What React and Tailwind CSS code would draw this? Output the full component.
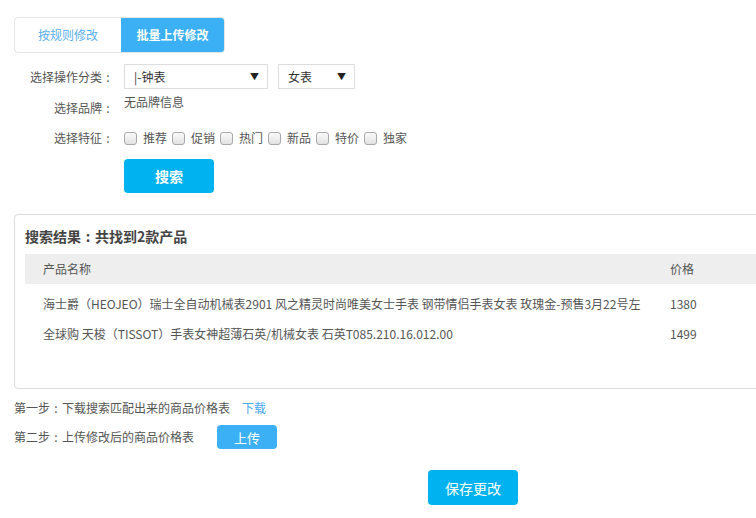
import React from "react";

const font = { fontFamily: '"Noto Sans CJK SC", "Noto Sans", sans-serif' };

function Colon() {
  return <span className="inline-block w-[12px] text-center">:</span>;
}

function Checkbox({ label }) {
  return (
    <label className="flex items-center">
      <span className="w-[13px] h-[13px] rounded-[3px] border border-[#a9a9a9] bg-gradient-to-b from-[#fafafa] to-[#e2e2e2] mr-[6px]"></span>
      <span className="mr-[5px]">{label}</span>
    </label>
  );
}

function Label({ text, className = "" }) {
  return (
    <div className={"w-[100px] mr-[10px] text-right whitespace-nowrap " + className}>
      {text}
      <Colon />
    </div>
  );
}

export default function App() {
  return (
    <div className="w-[756px] h-[518px] overflow-hidden bg-white text-[12px] text-[#555] leading-none" style={font}>
      <div className="pl-[14px] pt-[17px]">
        {/* tabs */}
        <div className="flex w-[211px] h-[36px] rounded-[4px] border border-[#e6e6e6] overflow-hidden">
          <div className="w-[106px] flex items-center justify-center text-[#5aaef0]">按规则修改</div>
          <div className="flex-1 flex items-center justify-center bg-[#3bb0f4] text-white font-bold">批量上传修改</div>
        </div>

        {/* form */}
        <div className="mt-[11px] flex items-center h-[25px]">
          <Label text="选择操作分类" />
          <div className="w-[144px] h-[25px] border border-[#ddd] flex items-center justify-between pl-[9px] pr-[8px] text-[#333]">
            <span>|-钟表</span>
            <span className="text-[9px] text-[#222]">▼</span>
          </div>
          <div className="ml-[10px] w-[77px] h-[25px] border border-[#ddd] flex items-center justify-between pl-[9px] pr-[8px] text-[#333]">
            <span>女表</span>
            <span className="text-[9px] text-[#222]">▼</span>
          </div>
        </div>

        <div className="mt-[7px] flex items-start h-[25px]">
          <Label text="选择品牌" className="pt-[6px]" />
          <div>无品牌信息</div>
        </div>

        <div className="mt-[7px] flex items-center h-[20px]">
          <Label text="选择特征" />
          <div className="flex items-center">
            {["推荐", "促销", "热门", "新品", "特价", "独家"].map((l) => (
              <Checkbox key={l} label={l} />
            ))}
          </div>
        </div>

        <div className="mt-[11px] pl-[110px]">
          <button className="w-[90px] h-[34px] rounded-[4px] bg-[#00b3f0] text-white text-[14px] font-bold">搜索</button>
        </div>

        {/* results */}
        <div className="mt-[21px] w-[780px] h-[175px] border border-[#ddd] rounded-[4px] pl-[10px] pt-[14px]">
          <div className="text-[14px] font-bold text-[#444] leading-[15px]">
            搜索结果<span className="inline-block w-[14px] text-center">:</span>共找到2款产品
          </div>
          <div className="mt-[10px] grid grid-cols-[627px_1fr] h-[30px] items-center bg-[#eee] pl-[18px]">
            <div>产品名称</div>
            <div>价格</div>
          </div>
          <div className="grid grid-cols-[627px_1fr] h-[30px] mt-[5px] items-center pl-[18px]">
            <div className="whitespace-nowrap">海士爵（HEOJEO）瑞士全自动机械表2901 风之精灵时尚唯美女士手表 钢带情侣手表女表 玫瑰金-预售3月22号左</div>
            <div>1380</div>
          </div>
          <div className="grid grid-cols-[627px_1fr] h-[30px] items-center pl-[18px]">
            <div className="whitespace-nowrap">全球购 天梭（TISSOT）手表女神超薄石英/机械女表 石英T085.210.16.012.00</div>
            <div>1499</div>
          </div>
        </div>

        {/* steps */}
        <div className="mt-[12px] flex items-center h-[14px]">
          <span>第一步<Colon />下载搜索匹配出来的商品价格表</span>
          <span className="ml-[12px] text-[#4ba8f0]">下载</span>
        </div>
        <div className="mt-[10px] flex items-center h-[24px]">
          <span>第二步<Colon />上传修改后的商品价格表</span>
          <button className="ml-[23px] w-[60px] h-[24px] rounded-[4px] bg-[#3bb0f4] text-white text-[13px]">上传</button>
        </div>

        <div className="mt-[21px] pl-[414px]">
          <button className="w-[90px] h-[35px] rounded-[4px] bg-[#00b3f0] text-white text-[14px]">保存更改</button>
        </div>
      </div>
    </div>
  );
}
